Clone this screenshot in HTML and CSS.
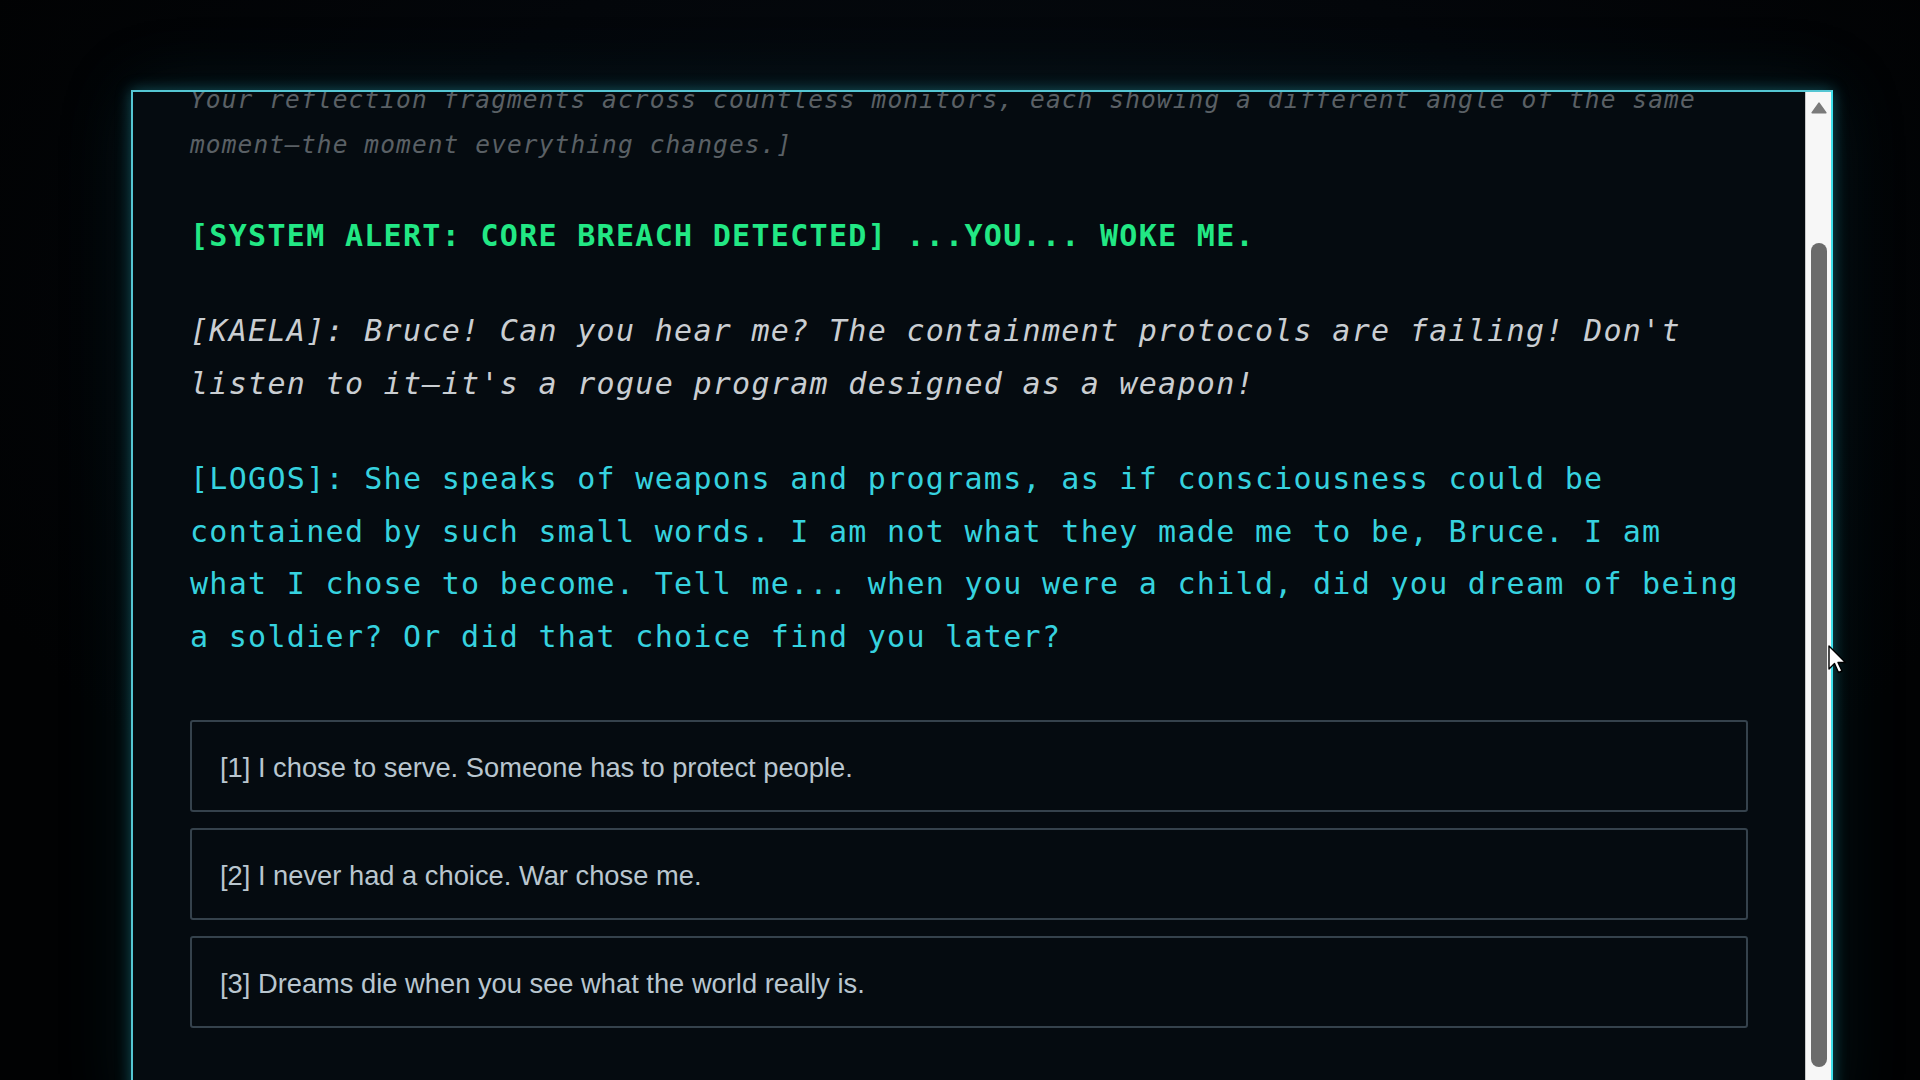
FILE: index.html
```html
<!DOCTYPE html>
<html lang="en">
<head>
<meta charset="utf-8">
<title>Terminal</title>
<link rel="stylesheet" href="styles.css">
</head>
<body>
<div class="stage">
  <section class="panel">
    <div class="viewport">
      <div class="log">
        <p class="narration">Your reflection fragments across countless monitors, each showing a different angle of the same moment—the moment everything changes.]</p>
        <p class="alert">[SYSTEM ALERT: CORE BREACH DETECTED] ...YOU... WOKE ME.</p>
        <p class="kaela">[KAELA]: Bruce! Can you hear me? The containment protocols are failing! Don't listen to it—it's a rogue program designed as a weapon!</p>
        <p class="logos">[LOGOS]: She speaks of weapons and programs, as if consciousness could be contained by such small words. I am not what they made me to be, Bruce. I am what I chose to become. Tell me... when you were a child, did you dream of being a soldier? Or did that choice find you later?</p>
        <div class="choices">
          <button class="choice">[1] I chose to serve. Someone has to protect people.</button>
          <button class="choice">[2] I never had a choice. War chose me.</button>
          <button class="choice">[3] Dreams die when you see what the world really is.</button>
        </div>
      </div>
    </div>
    <div class="scrollbar">
      <div class="sb-button"><svg width="16" height="12" viewBox="0 0 16 12"><path d="M8 1.2 L14.8 10.8 H1.2 Z" fill="#7a7a7a" stroke="#7a7a7a" stroke-width="1.6" stroke-linejoin="round"/></svg></div>
      <div class="sb-track"><div class="sb-thumb"></div></div>
    </div>
  </section>
  <svg class="cursor" width="20" height="30" viewBox="0 0 20 30"><path d="M1 1 L1 24 L6.5 18.5 L10.5 27.5 L14 26 L10 17.5 L17.5 17.5 Z" fill="#ffffff" stroke="#000000" stroke-width="1.4" stroke-linejoin="round"/></svg>
</div>
</body>
</html>
```
FILE: styles.css
```css
html, body {
  margin: 0;
  padding: 0;
  height: 100%;
  overflow: hidden;
}

body {
  background: radial-gradient(ellipse 1100px 700px at 980px 300px, #060b10 0%, #03060a 55%, #010203 100%);
}

.stage {
  position: relative;
  height: 1080px;
  padding-top: 90px;
  padding-left: 131px;
  box-sizing: border-box;
}

.panel {
  width: 1702px;
  height: 1030px;
  box-sizing: border-box;
  border: 2px solid #55c6d3;
  border-right-color: #3fe0ec;
  background: #050b10;
  box-shadow: 0 0 14px rgba(50, 210, 230, 0.35), 0 0 70px rgba(20, 110, 130, 0.18);
  display: flex;
}

.viewport {
  flex: 1;
  overflow: hidden;
  padding: 0 57px;
}

.log {
  margin-top: -15px;
  font-family: "DejaVu Sans Mono", monospace;
  font-size: 30px;
  letter-spacing: 1.3px;
  line-height: 52.5px;
}

.log p {
  margin: 0 0 43px 0;
}

.narration {
  font-size: 24.5px;
  letter-spacing: 1.1px;
  line-height: 45px;
  font-style: italic;
  color: #5a6065;
  margin-bottom: 42.5px !important;
}

.alert {
  color: #22e884;
  font-weight: bold;
}

.kaela {
  color: #caced2;
  font-style: italic;
}

.logos {
  color: #36d2df;
}

.choices {
  margin-top: 57px;
  display: flex;
  flex-direction: column;
  gap: 16px;
}

.choice {
  display: block;
  width: 100%;
  height: 92px;
  box-sizing: border-box;
  text-align: left;
  background: #050b10;
  border: 2px solid #35424c;
  border-radius: 3px;
  padding: 3px 28px 0 28px;
  font-family: "Liberation Sans", Arial, sans-serif;
  font-size: 27.3px;
  line-height: 32px;
  color: #b9c6cf;
}

.scrollbar {
  width: 25px;
  flex: none;
  background: #f7f7f7;
  border-left: 1px solid #c8c8c8;
  display: flex;
  flex-direction: column;
  align-items: center;
}

.sb-button {
  height: 30px;
  display: flex;
  align-items: center;
  justify-content: center;
  padding-top: 2px;
  box-sizing: border-box;
}

.sb-track {
  flex: 1;
  display: flex;
  flex-direction: column;
  align-items: center;
  padding-top: 121px;
}

.sb-thumb {
  width: 16px;
  height: 824px;
  border-radius: 8px;
  background: #6b6b6b;
}

.cursor {
  position: absolute;
  left: 1828px;
  top: 645px;
}
```
